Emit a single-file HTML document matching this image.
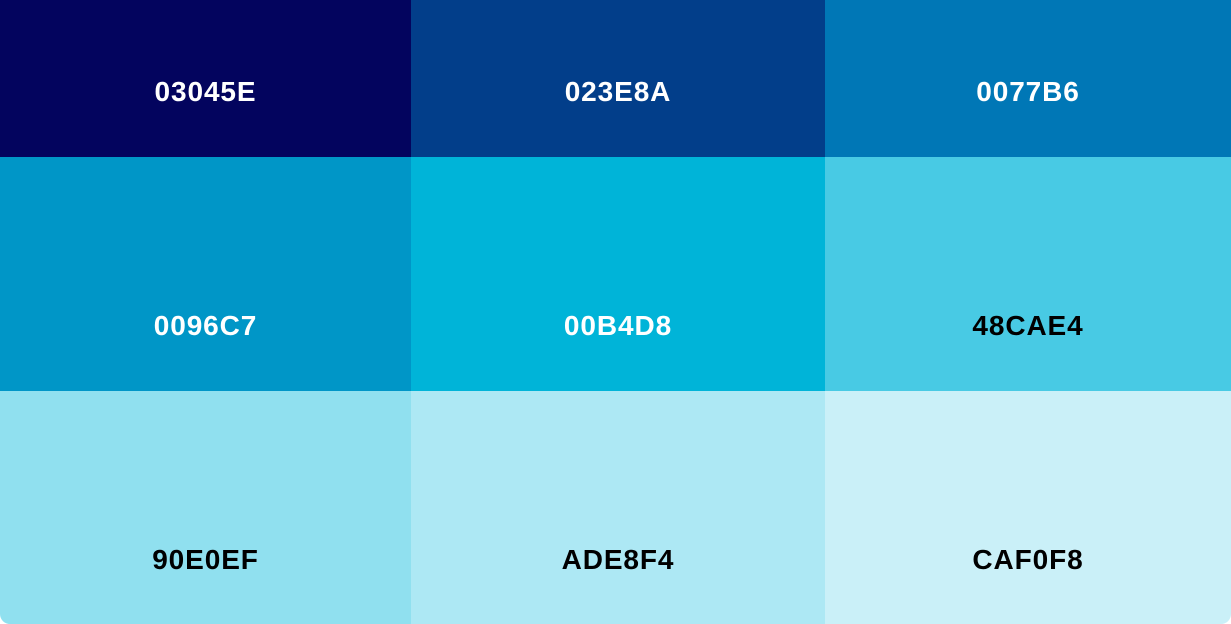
<!DOCTYPE html>
<html><head><style>
body{margin:0;width:1231px;height:624px;overflow:hidden;background:#fff}
.w{position:relative;width:1231px;height:624px;border-radius:0 0 10px 10px;overflow:hidden}
.c{position:absolute;font:bold 28px "Liberation Sans",sans-serif;text-align:center;letter-spacing:0.9px}
.c span{position:absolute;left:0;right:0;line-height:30px}
</style></head><body><div class="w">
<div class="c" style="left:0;top:0;width:411px;height:157px;background:#03045E;color:#fff"><span style="top:77px">03045E</span></div>
<div class="c" style="left:411px;top:0;width:414px;height:157px;background:#023E8A;color:#fff"><span style="top:77px">023E8A</span></div>
<div class="c" style="left:825px;top:0;width:406px;height:157px;background:#0077B6;color:#fff"><span style="top:77px">0077B6</span></div>
<div class="c" style="left:0;top:157px;width:411px;height:234px;background:#0096C7;color:#fff"><span style="top:154px">0096C7</span></div>
<div class="c" style="left:411px;top:157px;width:414px;height:234px;background:#00B4D8;color:#fff"><span style="top:154px">00B4D8</span></div>
<div class="c" style="left:825px;top:157px;width:406px;height:234px;background:#48CAE4;color:#000"><span style="top:154px">48CAE4</span></div>
<div class="c" style="left:0;top:391px;width:411px;height:233px;background:#90E0EF;color:#000"><span style="top:154px">90E0EF</span></div>
<div class="c" style="left:411px;top:391px;width:414px;height:233px;background:#ADE8F4;color:#000"><span style="top:154px">ADE8F4</span></div>
<div class="c" style="left:825px;top:391px;width:406px;height:233px;background:#CAF0F8;color:#000"><span style="top:154px">CAF0F8</span></div>
</div></body></html>
